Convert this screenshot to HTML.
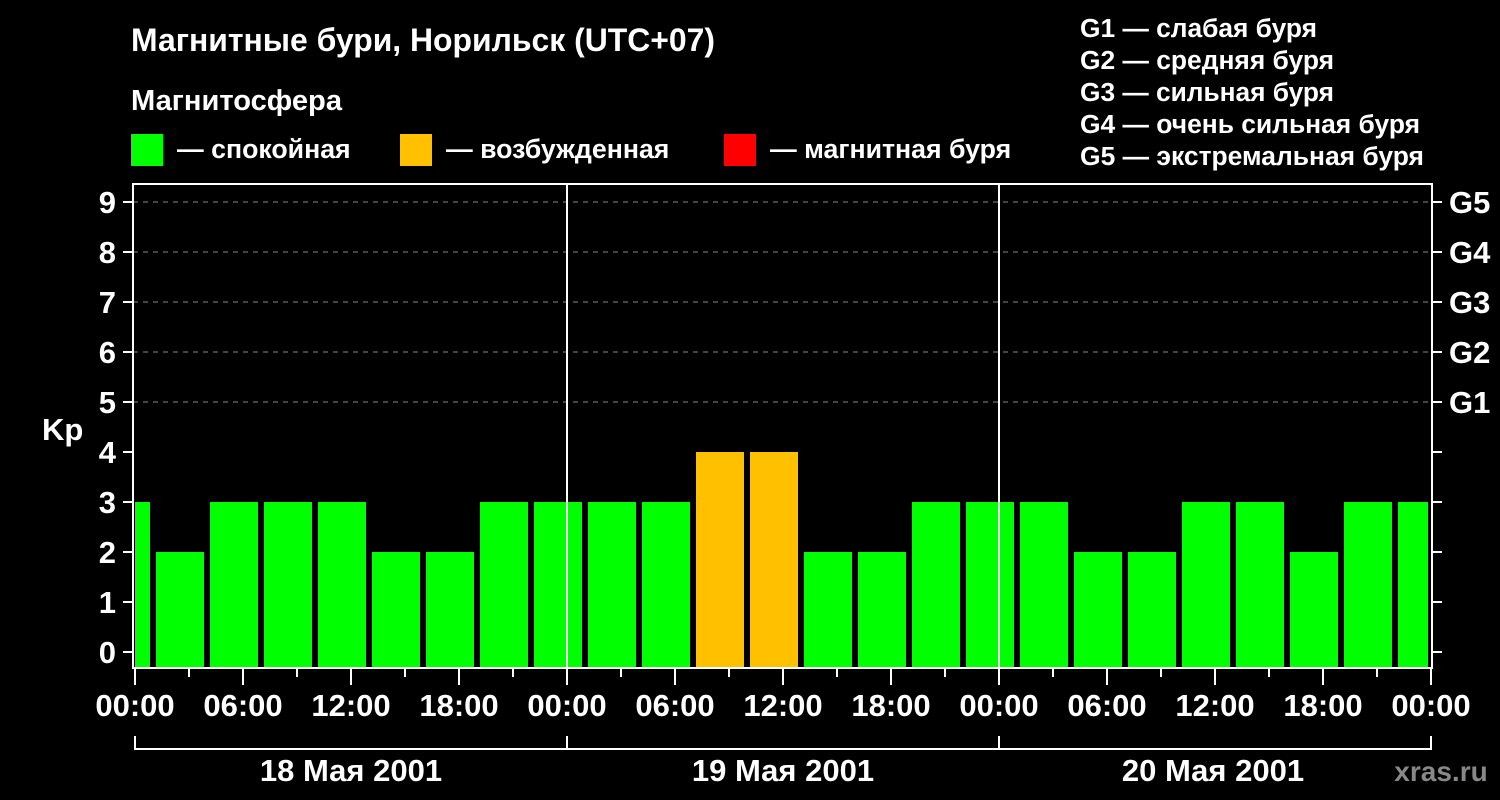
<!DOCTYPE html>
<html><head><meta charset="utf-8"><style>
html,body{margin:0;padding:0;background:#000;width:1500px;height:800px;overflow:hidden}
svg{display:block}
text{font-family:"Liberation Sans",sans-serif;font-weight:bold;fill:#fff}
</style></head><body>
<svg width="1500" height="800" xmlns="http://www.w3.org/2000/svg">
<rect width="1500" height="800" fill="#000"/>
<text x="131" y="51" font-size="32" textLength="584" lengthAdjust="spacingAndGlyphs">Магнитные бури, Норильск (UTC+07)</text>
<text x="131" y="110" font-size="29" textLength="211" lengthAdjust="spacingAndGlyphs">Магнитосфера</text>
<rect x="131" y="134" width="32" height="32" fill="#00ff00"/>
<text x="177" y="158" font-size="26.7">— спокойная</text>
<rect x="400" y="134" width="32" height="32" fill="#ffc000"/>
<text x="446" y="158" font-size="26.7">— возбужденная</text>
<rect x="724" y="134" width="32" height="32" fill="#ff0000"/>
<text x="770" y="158" font-size="26.7">— магнитная буря</text>
<g font-size="25.5">
<text x="1080" y="37" textLength="237" lengthAdjust="spacingAndGlyphs">G1 — слабая буря</text>
<text x="1080" y="69" textLength="254" lengthAdjust="spacingAndGlyphs">G2 — средняя буря</text>
<text x="1080" y="101" textLength="254" lengthAdjust="spacingAndGlyphs">G3 — сильная буря</text>
<text x="1080" y="133" textLength="340" lengthAdjust="spacingAndGlyphs">G4 — очень сильная буря</text>
<text x="1080" y="165" textLength="344" lengthAdjust="spacingAndGlyphs">G5 — экстремальная буря</text>
</g>
<g stroke="#888" stroke-width="1" stroke-dasharray="5,5">
<line x1="133" y1="202" x2="1432" y2="202"/><line x1="133" y1="252" x2="1432" y2="252"/>
<line x1="133" y1="302" x2="1432" y2="302"/><line x1="133" y1="352" x2="1432" y2="352"/>
<line x1="133" y1="402" x2="1432" y2="402"/>
</g>
<g id="bars"></g>
<g stroke="#fff" stroke-width="2" fill="none">
<rect x="133" y="184" width="1299" height="484"/>
<line x1="567" y1="184" x2="567" y2="668"/><line x1="999" y1="184" x2="999" y2="668"/>
<path d="M135 736V749H1431V736M567 736V749M999 736V749"/>
</g>
<g id="ticks" stroke="#fff" stroke-width="2"></g>
<g font-size="31" text-anchor="end" id="ylab"></g>
<g font-size="31" id="glab">
<text x="1449" y="213">G5</text><text x="1449" y="263">G4</text><text x="1449" y="313">G3</text>
<text x="1449" y="363">G2</text><text x="1449" y="413">G1</text>
</g>
<text x="42" y="440" font-size="31">Kp</text>
<g font-size="31" text-anchor="middle" id="xlab"></g>
<g font-size="31" text-anchor="middle">
<text x="351" y="781">18 Мая 2001</text><text x="783" y="781">19 Мая 2001</text><text x="1213" y="781">20 Мая 2001</text>
</g>
<text x="1441" y="781" font-size="28" text-anchor="middle" style="fill:#888">xras.ru</text>
</svg>
<script>
var ns="http://www.w3.org/2000/svg";
function el(p,t,a,txt){var e=document.createElementNS(ns,t);for(var k in a)e.setAttribute(k,a[k]);if(txt)e.textContent=txt;document.getElementById(p).appendChild(e);}
var v=[3,2,3,3,3,2,2,3,3,3,3,4,4,2,2,3,3,3,2,2,3,3,2,3,3];
for(var i=0;i<25;i++){var x=102+54*i,w=48;if(x<135){w-=135-x;x=135;}if(x+w>1428)w=1428-x;
el("bars","rect",{x:x,y:652-v[i]*50,width:w,height:16+v[i]*50,fill:v[i]>=4?"#ffc000":"#00ff00"});}
for(var k=0;k<10;k++){var y=652-50*k;el("ticks","line",{x1:123,y1:y,x2:133,y2:y});el("ticks","line",{x1:1432,y1:y,x2:1442,y2:y});
el("ylab","text",{x:116,y:y+11},""+k);}
var lb=["00:00","06:00","12:00","18:00"];
for(var j=0;j<=24;j++){var x=135+j*54;el("ticks","line",{x1:x,y1:668,x2:x,y2:j%2?677:685});
if(j%2==0)el("xlab","text",{x:x,y:716},lb[(j/2)%4]);}
</script>
</body></html>
